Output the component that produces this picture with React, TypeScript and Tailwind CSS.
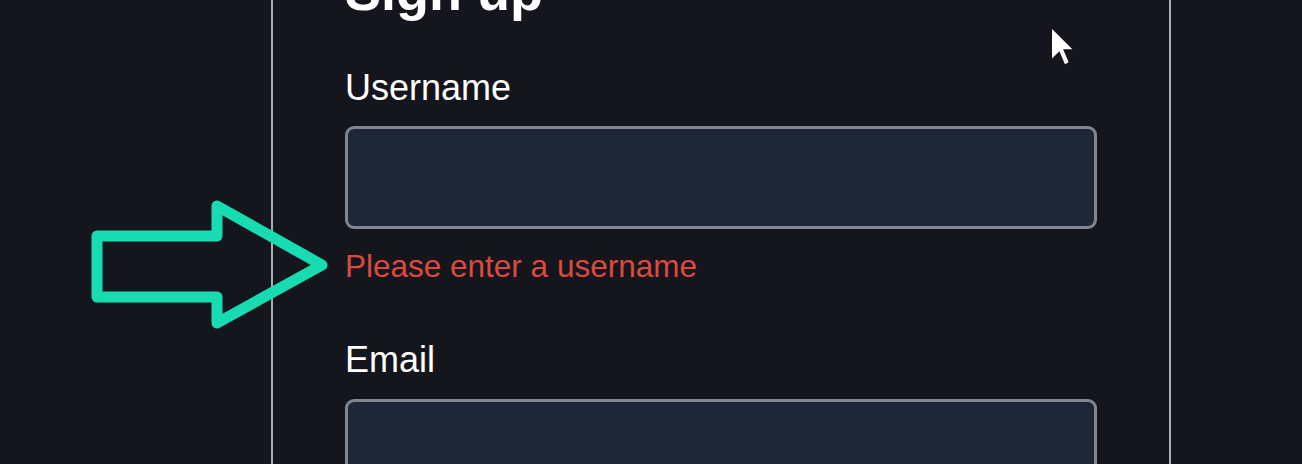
import React from "react";

export default function App() {
  return (
    <div
      className="relative w-[1302px] h-[464px] overflow-hidden bg-[#15161d]"
      style={{ fontFamily: '"Liberation Sans", Arial, sans-serif' }}
    >
      <div className="ml-[271px] flex w-[900px] h-[464px] flex-col border-x-2 border-[#a9adb5] px-[72px]">
        <h1 className="mt-[-39px] text-[54px] leading-[60px] font-bold text-white">Sign up</h1>
        <label className="mt-[47px] block text-[36px] leading-[40px] text-white">Username</label>
        <div className="mt-[18px] h-[103px] shrink-0 rounded-[9px] border-[3px] border-[#80858f] bg-[#1e2638]" />
        <p className="mt-[19px] text-[31.5px] leading-[36px] text-[#dc4a3e]">Please enter a username</p>
        <label className="mt-[56px] block text-[36px] leading-[40px] text-white">Email</label>
        <div className="mt-[19px] h-[103px] shrink-0 rounded-[9px] border-[3px] border-[#80858f] bg-[#1e2638]" />
      </div>

      <svg className="absolute left-0 top-0" width="1302" height="464" viewBox="0 0 1302 464">
        <polygon
          points="97,236 217,236 217,206 322,265 217,323 217,297 97,297"
          fill="none"
          stroke="#17dcb2"
          strokeWidth="11"
          strokeLinejoin="round"
        />
        <g transform="translate(1052,29) scale(1.85)">
          <polygon points="0,0 0,16 4,12 7,19 9,18 6,11 11,11" fill="#ffffff" />
        </g>
      </svg>
    </div>
  );
}
